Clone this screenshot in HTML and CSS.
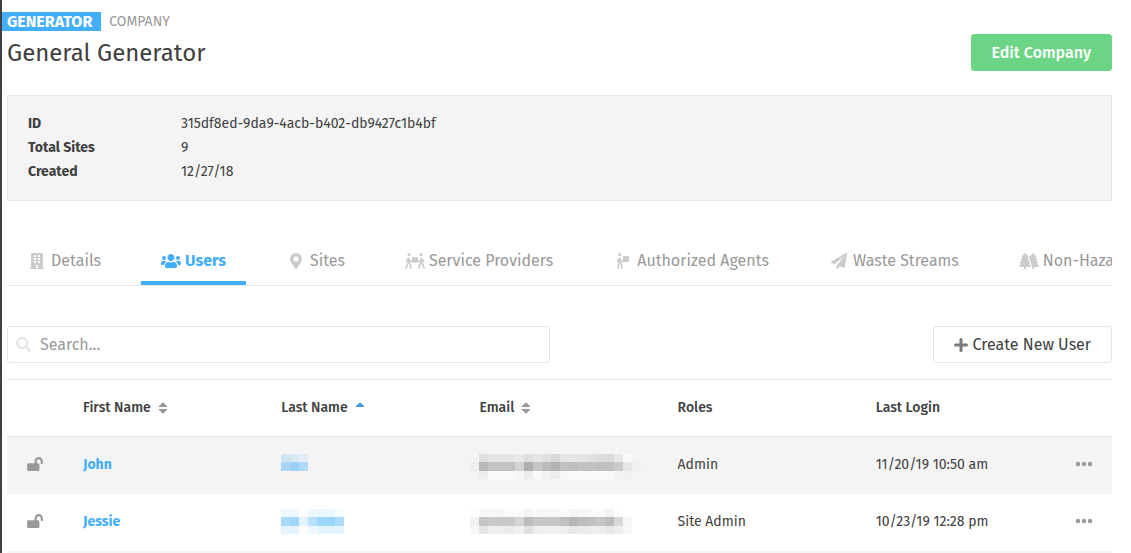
FILE: index.html
```html
<!DOCTYPE html>
<html lang="en">
<head>
  <meta charset="UTF-8" />
  <meta name="viewport" content="width=device-width, initial-scale=1" />
  <title>General Generator</title>
  <link rel="stylesheet" href="styles.css">
</head>
<body>

  <!-- shared icons -->
  <svg class="sprite" aria-hidden="true">
    <symbol id="lock-open" viewBox="0 0 576 512"><path d="M423.5 0C339.5.3 272 69.5 272 153.500V224H48c-26.500 0-48 21.500-48 48v192c0 26.500 21.500 48 48 48h352c26.500 0 48-21.500 48-48V272c0-26.500-21.500-48-48-48h-48v-71.100c0-39.600 31.700-72.500 71.300-72.900 40-.4 72.700 32.100 72.700 72v80c0 13.300 10.700 24 24 24h32c13.300 0 24-10.700 24-24v-80C576 68 507.500-.3 423.500 0z"/></symbol>
    <symbol id="dots" viewBox="0 0 16 16"><circle cx="2" cy="8" r="2.200"/><circle cx="8" cy="8" r="2.200"/><circle cx="14" cy="8" r="2.200"/></symbol>
    <symbol id="sort" viewBox="0 0 10 12"><path d="M1 5Q.4 5 .8 4.300L4.400.7Q5 .2 5.600.7L9.200 4.300Q9.600 5 9 5zM1 7Q.4 7 .8 7.700L4.400 11.300Q5 11.800 5.600 11.300L9.200 7.700Q9.600 7 9 7z"/></symbol>
    <symbol id="sort-up" viewBox="0 0 10 12"><path d="M1 5Q.4 5 .8 4.300L4.400.7Q5 .2 5.600.7L9.200 4.300Q9.600 5 9 5z"/></symbol>
  </svg>

  <header class="page-header">
    <div>
      <div class="labels">
        <span class="badge">GENERATOR</span>
        <span class="kind">COMPANY</span>
      </div>
      <h1>General Generator</h1>
    </div>
    <button type="button" class="btn btn-primary">Edit Company</button>
  </header>

  <dl class="summary">
    <dt>ID</dt><dd>315df8ed-9da9-4acb-b402-db9427c1b4bf</dd>
    <dt>Total Sites</dt><dd>9</dd>
    <dt>Created</dt><dd>12/27/18</dd>
  </dl>

  <nav class="tabs">
    <a href="#details" class="tab">
      <svg class="tab-icon" viewBox="-96 0 640 512"><path d="M436 480h-20V24c0-13.255-10.745-24-24-24H56C42.745 0 32 10.745 32 24v456H12c-6.627 0-12 5.373-12 12v20h448v-20c0-6.627-5.373-12-12-12zM128 76c0-6.627 5.373-12 12-12h40c6.627 0 12 5.373 12 12v40c0 6.627-5.373 12-12 12h-40c-6.627 0-12-5.373-12-12V76zm0 96c0-6.627 5.373-12 12-12h40c6.627 0 12 5.373 12 12v40c0 6.627-5.373 12-12 12h-40c-6.627 0-12-5.373-12-12v-40zm52 148h-40c-6.627 0-12-5.373-12-12v-40c0-6.627 5.373-12 12-12h40c6.627 0 12 5.373 12 12v40c0 6.627-5.373 12-12 12zm76 160h-64v-84c0-6.627 5.373-12 12-12h40c6.627 0 12 5.373 12 12v84zm64-172c0 6.627-5.373 12-12 12h-40c-6.627 0-12-5.373-12-12v-40c0-6.627 5.373-12 12-12h40c6.627 0 12 5.373 12 12v40zm0-96c0 6.627-5.373 12-12 12h-40c-6.627 0-12-5.373-12-12v-40c0-6.627 5.373-12 12-12h40c6.627 0 12 5.373 12 12v40zm0-96c0 6.627-5.373 12-12 12h-40c-6.627 0-12-5.373-12-12V76c0-6.627 5.373-12 12-12h40c6.627 0 12 5.373 12 12v40z"/></svg>
      Details
    </a>
    <a href="#users" class="tab active" aria-current="page">
      <svg class="tab-icon" viewBox="0 0 640 512"><path d="M96 224c35.300 0 64-28.700 64-64s-28.700-64-64-64-64 28.700-64 64 28.700 64 64 64zm448 0c35.300 0 64-28.700 64-64s-28.700-64-64-64-64 28.700-64 64 28.700 64 64 64zm32 32h-64c-17.600 0-33.500 7.100-45.100 18.600 40.300 22.100 68.900 62 75.100 109.400h66c17.700 0 32-14.300 32-32v-32c0-35.300-28.700-64-64-64zm-256 0c61.900 0 112-50.100 112-112S381.900 32 320 32 208 82.100 208 144s50.100 112 112 112zm76.800 32h-8.300c-20.800 10-43.900 16-68.500 16s-47.600-6-68.500-16h-8.300C179.600 288 128 339.600 128 403.200V432c0 26.500 21.500 48 48 48h288c26.500 0 48-21.500 48-48v-28.800c0-63.600-51.600-115.200-115.200-115.200zm-223.700-13.400C161.500 263.100 145.600 256 128 256H64c-35.300 0-64 28.700-64 64v32c0 17.700 14.300 32 32 32h65.900c6.300-47.400 34.900-87.300 75.200-109.400z"/></svg>
      Users
    </a>
    <a href="#sites" class="tab">
      <svg class="tab-icon" viewBox="-128 0 640 512"><path d="M172.268 501.670C26.970 291.031 0 269.413 0 192 0 85.961 85.961 0 192 0s192 85.961 192 192c0 77.413-26.970 99.031-172.268 309.670-9.535 13.774-29.930 13.773-39.464 0zM192 272c44.183 0 80-35.817 80-80s-35.817-80-80-80-80 35.817-80 80 35.817 80 80 80z"/></svg>
      Sites
    </a>
    <a href="#providers" class="tab">
      <svg class="tab-icon" viewBox="0 0 640 512">
        <circle cx="128" cy="48" r="48"/><circle cx="512" cy="48" r="48"/>
        <rect x="224" y="128" width="192" height="176" rx="14"/>
        <path class="limb" d="M212 270H160L118 178L70 212L52 280M128 190L112 310L172 372L192 480M76 356L60 416L28 484M428 270H480L522 178L570 212L588 280M512 190L528 310L468 372L448 480M564 356L580 416L612 484"/>
      </svg>
      Service Providers
    </a>
    <a href="#agents" class="tab">
      <svg class="tab-icon" viewBox="-128 0 640 512">
        <circle cx="88" cy="48" r="48"/>
        <rect x="192" y="96" width="192" height="192" rx="14"/>
        <path class="limb" d="M196 272H136L88 178L40 212L28 280M92 190L82 310L138 372L160 480M46 356L40 480"/>
      </svg>
      Authorized Agents
    </a>
    <a href="#streams" class="tab">
      <svg class="tab-icon" viewBox="-64 0 640 512"><path d="M476 3.200L12.500 270.600c-18.100 10.400-15.800 35.600 2.200 43.200L121 358.400l287.300-253.200c5.500-4.900 13.300 2.600 8.600 8.300L176 407v80.500c0 23.600 28.500 32.900 42.500 15.800L282 426l124.600 52.200c14.200 6 30.400-2.900 33-18.200l72-432C515 7.800 493.300-6.800 476 3.200z"/></svg>
      Waste Streams
    </a>
    <a href="#non-hazardous" class="tab">
      <svg class="tab-icon" viewBox="0 0 640 512"><path d="M192 0L296 100Q310 128 284 128H260L324 200Q340 232 312 232H290L356 314Q370 346 340 346H322L378 416Q392 448 362 448H224V480L240 512H144L160 480V448H22Q-8 448 6 416L62 346H44Q14 346 28 314L94 232H72Q44 232 60 200L124 128H100Q74 128 88 100zM448 0L552 100Q566 128 540 128H516L580 200Q596 232 568 232H546L612 314Q626 346 596 346H578L634 416Q648 448 618 448H480V480L496 512H400L416 480H410Q430 440 408 400L384 370Q404 340 386 302L344 250Q366 220 350 188L320 148Q336 120 322 96L352 100z"/></svg>
      Non-Hazardous Waste
    </a>
  </nav>

  <div class="toolbar">
    <div class="search">
      <svg class="search-icon" viewBox="0 0 512 512"><path d="M505 442.700L405.300 343c-4.500-4.500-10.600-7-17-7H372c27.600-35.300 44-79.700 44-128C416 93.100 322.900 0 208 0S0 93.100 0 208s93.100 208 208 208c48.300 0 92.700-16.400 128-44v16.300c0 6.400 2.500 12.500 7 17l99.700 99.700c9.400 9.400 24.600 9.400 33.900 0l28.300-28.300c9.400-9.400 9.400-24.600.1-34zM208 336c-70.700 0-128-57.200-128-128 0-70.700 57.200-128 128-128 70.700 0 128 57.200 128 128 0 70.700-57.200 128-128 128z"/></svg>
      <input type="text" placeholder="Search..." aria-label="Search users" />
    </div>
    <button type="button" class="btn btn-outline">
      <svg class="plus-icon" viewBox="0 0 14 14"><path d="M7 1.500V12.500M1.500 7H12.500"/></svg>
      Create New User
    </button>
  </div>

  <table>
    <colgroup>
      <col class="col-lock"><col><col><col><col><col><col class="col-more">
    </colgroup>
    <thead>
      <tr>
        <th></th>
        <th>First Name<svg class="sort"><use href="#sort"/></svg></th>
        <th aria-sort="ascending">Last Name<svg class="sort sorted"><use href="#sort-up"/></svg></th>
        <th>Email<svg class="sort"><use href="#sort"/></svg></th>
        <th>Roles</th>
        <th>Last Login</th>
        <th></th>
      </tr>
    </thead>
    <tbody>
      <tr>
        <td class="icon-cell"><svg class="lock"><use href="#lock-open"/></svg></td>
        <td><a href="#john">John</a></td>
        <td class="private"><svg class="mosaic" data-rows="cde5f3 d8e9f2 e2eef6|a9d6f7 9bd1f8 b0dbf7|faf5f2 faf5f2 f7f5f4"></svg></td>
        <td class="private"><svg class="mosaic wide" data-rows="f4f4f4 dfdfdf e4e4e4 e4e4e4 e4e4e4 e8e8e8 dfdfdf e4e4e4 e0e0e0 d8d8d8 e6e6e6 e6e6e6 e3e3e3 e0e0e0 dddddd dbdbdb e8e8e8 f9f9f9|eeeeee b9b9b9 c4c4c4 c4c4c4 c2c2c2 d2d2d2 afafaf c6c6c6 bababa b3b3b3 c0c0c0 bebebe c2c2c2 c2c2c2 bfbfbf c1c1c1 cbcbcb e7e7e7 f0f0f0|f4f4f4 eeeeee f9f9f9 f9f9f9 f9f9f9 f6f6f6 ececec fafafa f1f1f1 ececec f7f7f7 f9f9f9 f9f9f9 f9f9f9 f9f9f9 f9f9f9 f4f4f4 f0f0f0"></svg></td>
        <td>Admin</td>
        <td>11/20/19 10:50 am</td>
        <td class="icon-cell"><button type="button" class="more" aria-label="More actions for John"><svg class="dots"><use href="#dots"/></svg></button></td>
      </tr>
      <tr>
        <td class="icon-cell"><svg class="lock"><use href="#lock-open"/></svg></td>
        <td><a href="#jessie">Jessie</a></td>
        <td><svg class="mosaic" data-rows="eff9ff eff9ff fbfdff ecf7ff ecf7ff eaf8ff f6fdff|a9dbfd a0d7fc e5f4fe b9e1fc 9ed6fc 9bd5fc aedcfb|e5f4fe e5f4fe fbfdff eff8ff e3f4fe e3f4fe e5f4fe"></svg></td>
        <td><svg class="mosaic wide" data-rows="fdfdfd f8f8f8 f8f8f8 f8f8f8 fafafa fafafa f4f4f4 f9f9f9 f7f7f7 f7f7f7 f9f9f9 f4f4f4 f6f6f6 fafafa fafafa f4f4f4 fdfdfd|f2f2f2 c5c5c5 cacaca c8c8c8 c8c8c8 d6d6d6 bdbdbd c6c6c6 c6c6c6 c6c6c6 c0c0c0 b6b6b6 bdbdbd c0c0c0 c6c6c6 bdbdbd d7d7d7 f8f8f8|f7f7f7 e6e6e6 eeeeee eeeeee ebebeb f1f1f1 e0e0e0 efefef f1f1f1 f1f1f1 ededed e8e8e8 ebebeb ededed ededed e7e7e7 eeeeee f8f8f8"></svg></td>
        <td>Site Admin</td>
        <td>10/23/19 12:28 pm</td>
        <td class="icon-cell"><button type="button" class="more" aria-label="More actions for Jessie"><svg class="dots"><use href="#dots"/></svg></button></td>
      </tr>
      <tr><td colspan="7"></td></tr>
    </tbody>
  </table>

  <script>
    // pixelated placeholder for private values, rows split by "|"
    document.querySelectorAll('.mosaic').forEach(function (svg) {
      const heights = [8, 9, 8];
      let y = 0;
      svg.dataset.rows.split('|').forEach(function (row, r) {
        row.split(' ').forEach(function (color, i) {
          const rect = document.createElementNS('http://www.w3.org/2000/svg', 'rect');
          rect.setAttribute('x', i * 9);
          rect.setAttribute('y', y);
          rect.setAttribute('width', 9);
          rect.setAttribute('height', heights[r]);
          rect.setAttribute('fill', '#' + color);
          svg.appendChild(rect);
        });
        y += heights[r];
      });
    });
  </script>
</body>
</html>
```
FILE: styles.css
```css
* {
  box-sizing: border-box;
}

body {
  font-family: "Fira Sans", Roboto, sans-serif;
  font-size: 14px;
  line-height: 24px;
  color: #404041;
  background-color: #ffffff;
  margin: 0;
  padding: 12px 19px 0 5px;
  border-left: 2px solid #404041;
  height: 100vh;
  overflow: hidden;
}

svg {
  fill: currentColor;
}

.sprite {
  display: none;
}

a {
  color: #42aefc;
  text-decoration: none;
}

/* Header */
.page-header {
  display: flex;
  justify-content: space-between;
  align-items: flex-end;
}

.labels {
  display: flex;
  align-items: center;
  gap: 8px;
  height: 19px;
  margin-left: -5px;
}

.badge {
  background-color: #42aefc;
  color: #ffffff;
  font-size: 16px;
  font-weight: 700;
  line-height: 19px;
  padding: 0 9px 0 5px;
}

.kind {
  color: #999999;
}

h1 {
  font-size: 24px;
  font-weight: 400;
  line-height: 36px;
  margin: 4px 0 0;
}

/* Buttons */
.btn {
  font-family: inherit;
  font-size: 16px;
  line-height: 19px;
  padding: 8px 20px;
  border: 1px solid #e6e6e6;
  border-radius: 3px;
  cursor: pointer;
}

.btn-primary {
  background-color: #6bd585;
  border-color: #6bd585;
  color: #ffffff;
  font-weight: 500;
}

.btn-outline {
  display: flex;
  align-items: center;
  gap: 5px;
  background-color: #ffffff;
  color: #404041;
}

.plus-icon {
  width: 14px;
  height: 14px;
  stroke: #7a7a7a;
  stroke-width: 3;
  stroke-linecap: round;
}

/* Company summary */
.summary {
  display: grid;
  grid-template-columns: 153px 1fr;
  margin: 24px 0 0;
  padding: 16px 20px;
  background-color: #f4f4f4;
  border: 1px solid #e6e6e6;
}

dt {
  font-weight: 700;
}

dd {
  margin: 0;
}

/* Tabs */
.tabs {
  display: flex;
  gap: 20px;
  margin-top: 35px;
  border-bottom: 1px solid #e6e6e6;
  overflow: hidden;
}

.tab {
  display: flex;
  flex: none;
  align-items: center;
  gap: 4px;
  padding: 13px 20px 8px;
  border-bottom: 4px solid transparent;
  color: #999999;
  font-size: 16px;
}

.tab.active {
  color: #42aefc;
  border-color: #42aefc;
  font-weight: 700;
}

.tab-icon {
  width: 20px;
  height: 16px;
  color: #cccccc;
}

.tab.active .tab-icon {
  color: inherit;
}

.limb {
  fill: none;
  stroke: currentColor;
  stroke-width: 54;
  stroke-linecap: round;
  stroke-linejoin: round;
}

/* Search and create */
.toolbar {
  display: grid;
  grid-template-columns: 1fr 1fr;
  gap: 20px;
  margin: 40px 0 16px;
}

.toolbar .btn {
  justify-self: end;
}

.search {
  display: flex;
  align-items: center;
  gap: 9px;
  height: 37px;
  padding: 0 8px;
  border: 1px solid #e6e6e6;
  border-radius: 3px;
}

.search-icon {
  width: 15px;
  height: 15px;
  color: #e6e6e6;
}

.search input {
  flex: 1;
  border: 0;
  outline: none;
  padding: 0;
  background: none;
  color: inherit;
  font-family: inherit;
  font-size: 16px;
}

.search input::placeholder {
  color: #999999;
}

/* Users table */
table {
  width: 100%;
  table-layout: fixed;
  border-collapse: separate;
  border-spacing: 0;
  border-top: 1px solid #e6e6e6;
}

.col-lock {
  width: 56px;
}

.col-more {
  width: 58px;
}

th, td {
  height: 57px;
  padding: 0 20px;
  text-align: left;
  white-space: nowrap;
}

th {
  font-weight: 500;
  border-bottom: 1px solid #e6e6e6;
}

td {
  padding-bottom: 2px;
}

tbody tr:nth-child(odd) {
  background-color: #f4f4f4;
}

td a {
  font-weight: 700;
}

td svg {
  display: block;
}

.icon-cell {
  padding-bottom: 4px;
}

.sort {
  width: 10px;
  height: 12px;
  margin-left: 7px;
  vertical-align: -2px;
  color: #999999;
}

.sort.sorted {
  color: #3f97e0;
}

.lock {
  width: 16px;
  height: 14px;
  color: #999999;
}

.more {
  display: block;
  margin-left: auto;
  padding: 0;
  border: 0;
  background: none;
  color: #999999;
  cursor: pointer;
}

.dots {
  width: 16px;
  height: 16px;
}

.private {
  padding-top: 4px;
}

.mosaic {
  width: 63px;
  height: 25px;
  shape-rendering: crispEdges;
}

.mosaic.wide {
  width: 171px;
  margin-left: -9px;
}
```
